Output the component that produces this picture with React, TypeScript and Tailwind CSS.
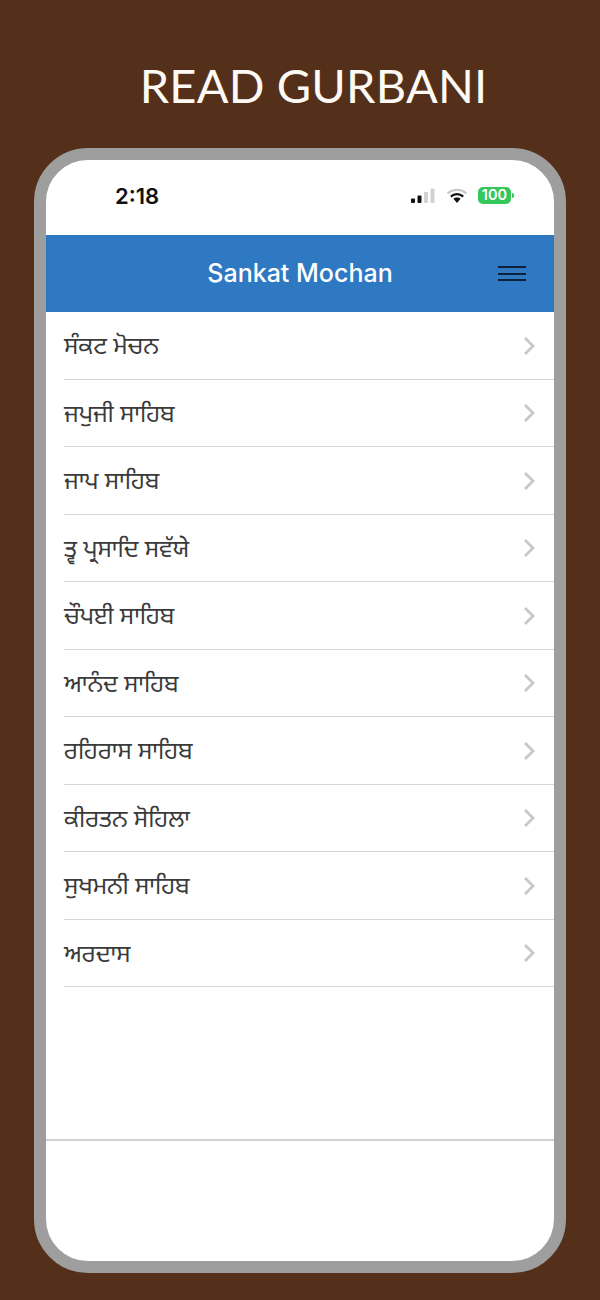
const items = ["ਸੰਕਟ ਮੋਚਨ","ਜਪੁਜੀ ਸਾਹਿਬ","ਜਾਪ ਸਾਹਿਬ","ਤ੍ਵ ਪ੍ਰਸਾਦਿ ਸਵੱਯੇ","ਚੌਪਈ ਸਾਹਿਬ","ਆਨੰਦ ਸਾਹਿਬ","ਰਹਿਰਾਸ ਸਾਹਿਬ","ਕੀਰਤਨ ਸੋਹਿਲਾ","ਸੁਖਮਨੀ ਸਾਹਿਬ","ਅਰਦਾਸ"];

function StatusIcons() {
  return (
    <div className="flex items-center gap-[10px]">
      <svg width="26" height="16" viewBox="0 0 26 16">
        <rect x="1" y="10.5" width="4" height="4.5" rx="1" fill="#111" />
        <rect x="7.5" y="7.5" width="4" height="7.5" rx="1" fill="#111" />
        <rect x="14" y="4" width="4" height="11" rx="1" fill="#d1d1d1" />
        <rect x="20.5" y="0.5" width="4" height="14.5" rx="1" fill="#d1d1d1" />
      </svg>
      <svg width="22" height="16" viewBox="0 0 22 16" fill="none">
        <path d="M1.5 5.5 C6.5 0.6 15.5 0.6 20.5 5.5" stroke="#c9c9c9" strokeWidth="2.2" />
        <path d="M4.8 8.6 C8.2 5.4 13.8 5.4 17.2 8.6" stroke="#111" strokeWidth="2.2" />
        <path d="M7.4 10.8 C9.4 9 12.6 9 14.6 10.8 L11 15 Z" fill="#111" />
      </svg>
      <div className="flex items-center">
        <div className="flex h-[17px] w-[33px] items-center justify-center rounded-[5px] bg-[#34c759] text-[14.5px] font-semibold leading-none text-white [font-family:Inter,sans-serif]">100</div>
        <div className="ml-[1px] h-[5px] w-[2px] rounded-r-sm bg-[#34c759]" />
      </div>
    </div>
  );
}

export default function App() {
  return (
    <div lang="pa" className="flex h-[1300px] w-[600px] flex-col items-center overflow-hidden bg-[#54301a] [font-family:'Liberation_Sans','Noto_Sans',sans-serif]">
      <h1 className="ml-[27px] mt-[57px] h-[58px] text-[47px] leading-[56px] tracking-[0.2px] text-[#fdfaf5] [font-family:Lato,sans-serif]">READ GURBANI</h1>
      <div className="mt-[33px] flex h-[1125px] w-[532px] flex-col overflow-hidden rounded-[54px] border-[12px] border-[#9e9e9e] bg-white">
        <div className="flex h-[75px] items-start justify-between pl-[69px] pr-[40px] pt-[22px]">
          <span className="text-[22px] font-semibold leading-[28px] text-[#111] [font-family:Inter,sans-serif]">2:18</span>
          <div className="pt-[5px]"><StatusIcons /></div>
        </div>
        <header className="relative flex h-[77px] items-center justify-center bg-[#2f78c2]">
          <span className="text-[25px] font-medium text-white [font-family:Inter,sans-serif]">Sankat Mochan</span>
          <div className="absolute right-[28px] top-[31px] flex w-[28px] flex-col gap-[4.5px]">
            <span className="h-[2px] bg-[#0d2138]" />
            <span className="h-[2px] bg-[#0d2138]" />
            <span className="h-[2px] bg-[#0d2138]" />
          </div>
        </header>
        <ul className="flex h-[827px] flex-col pl-[18px] [font-family:'Noto_Sans_Gurmukhi','Noto_Sans','Liberation_Sans',sans-serif]">
          {items.map((t) => (
            <li key={t} className="flex h-[67.5px] items-center justify-between border-b border-[#d6d6d6] pr-[19px] text-[24px] leading-[32px] text-[#3a3a3a]">
              <span className="mt-[6px]">{t}</span>
              <svg width="12" height="20" viewBox="0 0 12 20" fill="none" className="mt-[1px]">
                <path d="M2 2 L10 10 L2 18" stroke="#c8c8c8" strokeWidth="2.8" />
              </svg>
            </li>
          ))}
        </ul>
        <footer className="flex-1 border-t-2 border-[#d2d2d2]" />
      </div>
    </div>
  );
}
